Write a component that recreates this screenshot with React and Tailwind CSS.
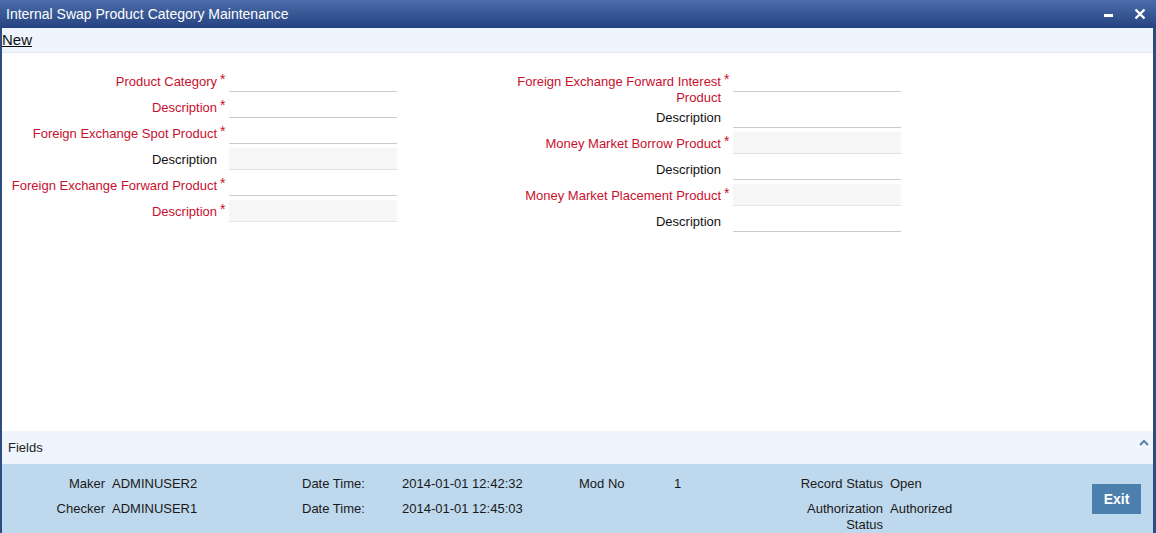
const leftRows = [
  { label: "Product Category", required: true, grey: false },
  { label: "Description", required: true, grey: false },
  { label: "Foreign Exchange Spot Product", required: true, grey: false },
  { label: "Description", required: false, grey: true },
  { label: "Foreign Exchange Forward Product", required: true, grey: false },
  { label: "Description", required: true, grey: true },
];

const rightRows = [
  { label: ["Foreign Exchange Forward Interest", "Product"], required: true, grey: false },
  { label: ["Description"], required: false, grey: false },
  { label: ["Money Market Borrow Product"], required: true, grey: true },
  { label: ["Description"], required: false, grey: false },
  { label: ["Money Market Placement Product"], required: true, grey: true },
  { label: ["Description"], required: false, grey: false },
];

const FieldRow = ({ lines, required, grey }) => (
  <div className="flex items-start">
    <div
      className={`w-[215px] pt-[4px] text-right text-[13px] leading-[16px] ${
        required ? "text-[#c8102e]" : "text-[#111]"
      }`}
    >
      {lines.map((l, i) => (
        <div key={i}>{l}</div>
      ))}
    </div>
    <div className="w-[12px] pl-[3px] pt-[1px] text-[14px] leading-[16px] text-[#c8102e]">
      {required ? "*" : ""}
    </div>
    <div
      className={`mb-[4px] h-[22px] w-[168px] border-b ${
        grey ? "border-[#e3e3e3] bg-[#f6f6f6]" : "border-[#c9c9c9] bg-white"
      }`}
    />
  </div>
);

export default function App() {
  return (
    <div
      className="flex h-[533px] w-[1156px] flex-col overflow-hidden bg-white text-[#111]"
      style={{ fontFamily: '"Liberation Sans", Arial, sans-serif' }}
    >
      {/* Title bar */}
      <div className="flex h-[28px] items-center bg-gradient-to-b from-[#4c6daa] to-[#254380] pl-[6px] pr-[10px]">
        <span className="text-[14px] text-white">Internal Swap Product Category Maintenance</span>
        <div className="ml-auto flex items-center gap-[21px]">
          <div className="mt-[2px] h-[3px] w-[9px] bg-white" />
          <svg width="12" height="12" viewBox="0 0 12 12">
            <path d="M1.5 1.5 L10.5 10.5 M10.5 1.5 L1.5 10.5" stroke="white" strokeWidth="2.4" />
          </svg>
        </div>
      </div>

      <div className="flex flex-1 flex-col border-l-2 border-r-[3px] border-[#2d4c80]">
        {/* Toolbar */}
        <div className="flex h-[25px] items-center border-b border-[#e1e8f0] bg-[#eef5fd]">
          <span className="text-[15px] text-[#111] underline">New</span>
        </div>

        {/* Form body */}
        <div className="flex flex-1 gap-[109px] pt-[17px]">
          <div className="flex flex-col">
            {leftRows.map((r, i) => (
              <FieldRow key={i} lines={[r.label]} required={r.required} grey={r.grey} />
            ))}
          </div>
          <div className="flex flex-col">
            {rightRows.map((r, i) => (
              <FieldRow key={i} lines={r.label} required={r.required} grey={r.grey} />
            ))}
          </div>
        </div>

        {/* Fields bar */}
        <div className="flex h-[33px] items-center bg-[#eef5fd] pl-[6px] pr-[4px]">
          <span className="text-[13px] text-[#222]">Fields</span>
          <svg className="ml-auto mb-[10px]" width="10" height="7" viewBox="0 0 10 7">
            <path d="M1 6 L5 2 L9 6" fill="none" stroke="#5b7fa9" strokeWidth="2" />
          </svg>
        </div>

        {/* Audit footer */}
        <div className="flex h-[69px] items-center bg-[#bed8ed] text-[13px] leading-[16px] text-[#1a1a1a]">
          <div className="grid grid-cols-[103px_197px_100px_177px_98px_116px_90px_150px] gap-y-[9px] self-start pt-[12px]">
            <div className="text-right">Maker</div>
            <div className="pl-[7px]">ADMINUSER2</div>
            <div>Date Time:</div>
            <div>2014-01-01 12:42:32</div>
            <div>Mod No</div>
            <div className="-ml-[3px]">1</div>
            <div className="text-right">Record Status</div>
            <div className="pl-[7px]">Open</div>

            <div className="text-right">Checker</div>
            <div className="pl-[7px]">ADMINUSER1</div>
            <div>Date Time:</div>
            <div>2014-01-01 12:45:03</div>
            <div />
            <div />
            <div className="text-right">Authorization Status</div>
            <div className="pl-[7px]">Authorized</div>
          </div>
          <button className="ml-auto mr-[12px] h-[30px] w-[49px] bg-[#4b80ae] text-[14px] font-bold text-white">
            Exit
          </button>
        </div>
      </div>
    </div>
  );
}
